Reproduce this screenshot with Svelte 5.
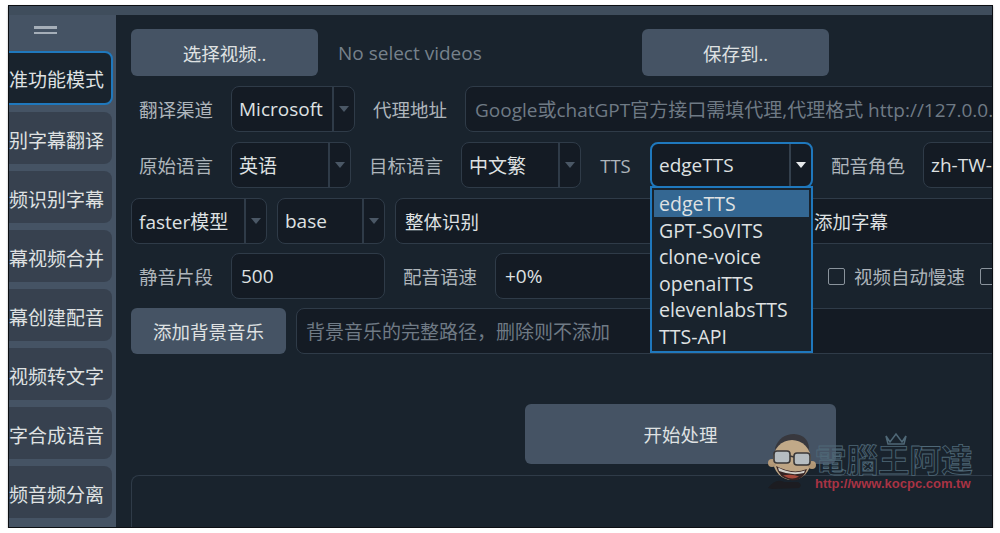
<script>
  // sidebar modes, the long names run off the left edge of the window
  const modes = [
    "标准功能模式",
    "识别字幕翻译",
    "音频识别字幕",
    "字幕视频合并",
    "字幕创建配音",
    "识别视频转文字",
    "文字合成语音",
    "视频音频分离"
  ];
  const engines = ["edgeTTS", "GPT-SoVITS", "clone-voice", "openaiTTS", "elevenlabsTTS", "TTS-API"];
</script>

<div class="frame">
  <div class="topbar"></div>
  <div class="body">
    <nav class="sidebar">
      <div class="handle"><i></i><i></i></div>
      {#each modes as mode, i}
        <div class="mode" class:active={i === 0}>{mode}</div>
      {/each}
    </nav>

    <main class="main">
      <div class="row first">
        <button class="btn w-pick">选择视频..</button>
        <span class="novideo">No select videos</span>
        <button class="btn w-pick">保存到..</button>
      </div>

      <div class="row">
        <span class="lbl">翻译渠道</span>
        <div class="combo w-123"><span class="val">Microsoft</span><span class="arrow"></span></div>
        <span class="lbl">代理地址</span>
        <div class="field wide muted">Google或chatGPT官方接口需填代理,代理格式 http://127.0.0.1:10809</div>
      </div>

      <div class="row">
        <span class="lbl">原始语言</span>
        <div class="combo w-120"><span class="val">英语</span><span class="arrow"></span></div>
        <span class="lbl">目标语言</span>
        <div class="combo w-120"><span class="val">中文繁</span><span class="arrow"></span></div>
        <span class="lbl tts">TTS</span>
        <div class="combo open w-162">
          <span class="val">edgeTTS</span><span class="arrow"></span>
          <ul class="dropdown">
            {#each engines as engine, i}
              <li class:current={i === 0}>{engine}</li>
            {/each}
          </ul>
        </div>
        <span class="lbl">配音角色</span>
        <div class="combo w-200"><span class="val">zh-TW-HsiaoChenNeural</span><span class="arrow"></span></div>
      </div>

      <div class="row tight">
        <div class="combo w-136"><span class="val">faster模型</span><span class="arrow"></span></div>
        <div class="combo w-107"><span class="val">base</span><span class="arrow"></span></div>
        <div class="field wide split"><span class="split-a">整体识别</span><span>添加字幕</span></div>
      </div>

      <div class="row tight">
        <span class="lbl">静音片段</span>
        <div class="field w-154">500</div>
        <span class="lbl">配音语速</span>
        <div class="field w-310">+0%</div>
        <label class="check first-check"><span class="box"></span>视频自动慢速</label>
        <label class="check"><span class="box"></span>配音自动加速</label>
      </div>

      <div class="row">
        <button class="btn w-155">添加背景音乐</button>
        <div class="field wide muted">背景音乐的完整路径，删除则不添加</div>
      </div>

      <button class="btn start">开始处理</button>
      <div class="log"></div>
    </main>
  </div>

  <div class="mark">
    <svg class="face" viewBox="0 0 50 58" width="50" height="58">
      <path d="M9 16 Q14 2 28 2 Q42 3 43 16 L42 22 L10 22Z" fill="#37363a" />
      <ellipse cx="26" cy="28" rx="19" ry="20" fill="#cfb38d" />
      <circle cx="6" cy="31" r="4" fill="#c2a37d" />
      <circle cx="46" cy="33" r="4" fill="#c2a37d" />
      <rect x="8" y="19" width="16" height="12" rx="3" fill="#c3c9cc" stroke="#3a3634" stroke-width="1.6" />
      <rect x="28" y="21" width="16" height="12" rx="3" fill="#c3c9cc" stroke="#3a3634" stroke-width="1.6" />
      <path d="M24 24 L28 25" stroke="#3a3634" stroke-width="1.6" />
      <path d="M10 34 Q27 43 41 37 Q37 50 24 48 Q13 46 10 34Z" fill="#3a2422" />
      <path d="M12 35.500 Q27 43 39 38.500 L38 41 Q26 44 13 39Z" fill="#e4e0d8" />
      <path d="M17 43.500 Q26 41.500 33 44.500 Q26 49 17 43.500Z" fill="#b94f3e" />
      <path d="M2 56 Q10 46 18 50 L32 50 Q37 53 33 56 L6 57Z" fill="#1d1c20" />
    </svg>
    <div class="brand">
      <svg class="crown" viewBox="0 0 24 14" width="24" height="14">
        <path d="M2 4 L6 10 L12 2 L18 10 L22 4 L20 12 L4 12Z" fill="none" stroke="#4f6877" stroke-width="1.500" />
      </svg>
      <div class="brand-name">電腦王阿達</div>
      <div class="brand-url">http://www.kocpc.com.tw</div>
    </div>
  </div>
</div>

<style>
  :global(body) {
    background: #fff;
  }

  .frame {
    position: relative;
    box-sizing: border-box;
    width: 985px;
    height: 523px;
    margin: 5px 0 0 8px;
    border: 1px solid #0c0f13;
    box-shadow: 0 1px 2px rgba(0, 0, 0, 0.3);
    display: flex;
    flex-direction: column;
    overflow: hidden;
    font-family: "Open Sans", "Noto Sans CJK SC", sans-serif;
    font-size: 18.500px;
    color: #dfe1e2;
  }

  .topbar {
    height: 9px;
    flex: none;
    background: #3f4d5c;
  }

  .body {
    flex: 1;
    display: flex;
    min-height: 0;
  }

  .sidebar {
    width: 107px;
    flex: none;
    background: #455364;
    overflow: hidden;
    display: flex;
    flex-direction: column;
    gap: 7px;
  }

  .handle {
    height: 30px;
    margin-bottom: -1px;
    padding: 11px 0 0 25px;
    box-sizing: border-box;
  }

  .handle i {
    display: block;
    width: 23px;
    height: 2.500px;
    margin-bottom: 3px;
    background: #a5aeb8;
  }

  .mode {
    flex: none;
    width: 140px;
    height: 52px;
    margin-left: -37px;
    box-sizing: border-box;
    border-radius: 8px;
    background: #37414f;
    display: flex;
    align-items: center;
    justify-content: flex-end;
    padding: 3px 8px 0 0;
    white-space: nowrap;
    font-size: 19px;
  }

  .mode.active {
    width: 141px;
    height: 54px;
    background: #19232d;
    border: 2px solid #1f78bd;
    padding: 2px 7px 0 0;
  }

  .main {
    flex: 1;
    min-width: 0;
    background: #19232d;
    overflow: hidden;
    padding: 14px 0 0 15px;
    display: flex;
    flex-direction: column;
  }

  .row {
    display: flex;
    align-items: stretch;
    gap: 10px;
    height: 46px;
    flex: none;
    margin-bottom: 10px;
    white-space: nowrap;
  }

  .row.first {
    height: 47px;
  }

  .row.tight {
    margin-bottom: 9px;
  }

  .lbl {
    width: 90px;
    flex: none;
    display: flex;
    align-items: center;
    justify-content: center;
    color: #aeb5bb;
  }

  .lbl.tts {
    width: 49px;
  }

  .muted {
    color: #6f7a85;
  }

  .novideo {
    width: 294px;
    flex: none;
    margin-left: 10px;
    align-self: center;
    font-size: 19px;
    color: #76818b;
  }

  .btn {
    flex: none;
    border: none;
    border-radius: 6px;
    background: #455364;
    color: #dfe1e2;
    font: inherit;
    padding: 0;
  }

  .combo,
  .field {
    flex: none;
    box-sizing: border-box;
    border: 1.500px solid #2f3b48;
    border-radius: 8px;
    background: #141b24;
    display: flex;
    align-items: center;
  }

  .field {
    padding-left: 9px;
    font-size: 19px;
  }

  .combo {
    position: relative;
    font-size: 19px;
  }

  .val {
    flex: 1;
    min-width: 0;
    padding-left: 7px;
    overflow: hidden;
  }

  .arrow {
    flex: none;
    align-self: stretch;
    width: 20px;
    border-left: 2px solid #2f3b48;
    position: relative;
  }

  .arrow::after {
    content: "";
    position: absolute;
    left: 5px;
    top: 50%;
    margin-top: -3px;
    border: 5px solid transparent;
    border-bottom: none;
    border-top: 6px solid #4a5765;
  }

  .combo.open {
    border: 2px solid #1f78bd;
  }

  .combo.open .arrow {
    border-left-color: #34404d;
  }

  .combo.open .arrow::after {
    border-top-color: #e6e8ea;
  }

  .dropdown {
    position: absolute;
    z-index: 2;
    top: 100%;
    left: -2px;
    right: -2px;
    margin: 0;
    padding: 2px;
    list-style: none;
    background: #19232d;
    border: 2px solid #1f78bd;
    height: 167px;
    box-sizing: border-box;
    font-size: 19.500px;
  }

  .dropdown li {
    height: 26.500px;
    line-height: 27px;
    padding-left: 5px;
  }

  .dropdown .current {
    background: #346792;
  }

  .w-pick { width: 187px; }
  .w-123 { width: 124px; }
  .w-120 { width: 120px; }
  .w-162 { width: 163px; }
  .w-200 { width: 200px; }
  .w-136 { width: 136px; }
  .w-107 { width: 108px; }
  .w-154 { width: 154px; }
  .w-310 { width: 310px; }
  .w-155 { width: 155px; }

  .wide {
    width: 720px;
  }

  .split {
    font-size: 18.500px;
  }

  .split-a {
    width: 409px;
    flex: none;
  }

  .check {
    flex: none;
    display: flex;
    align-items: center;
    gap: 9px;
    color: #aeb5bb;
    margin-left: 5px;
  }

  .first-check {
    margin-left: 13px;
  }

  .box {
    box-sizing: border-box;
    width: 17px;
    height: 17px;
    border: 1.500px solid #8a939c;
    border-radius: 2px;
  }

  .start {
    flex: none;
    width: 311px;
    height: 60px;
    margin: 40px 0 0 394px;
  }

  .log {
    flex: 1;
    margin-top: 11px;
    width: 1000px;
    border: 1.500px solid #2f3b48;
    border-bottom: none;
    border-radius: 8px 0 0 0;
    background: #19232d;
  }

  .mark {
    position: absolute;
    z-index: 3;
    left: 757px;
    top: 426px;
    display: flex;
    pointer-events: none;
  }

  .face {
    flex: none;
    opacity: 0.9;
  }

  .brand {
    position: relative;
    margin-left: -1px;
    padding-top: 11px;
    width: 160px;
  }

  .crown {
    position: absolute;
    left: 69px;
    top: 0;
  }

  .brand-name {
    font-size: 31.500px;
    line-height: 34px;
    font-weight: 700;
    color: transparent;
    -webkit-text-stroke: 0.800px #4f6877;
    white-space: nowrap;
  }

  .brand-url {
    font-family: "Liberation Sans", sans-serif;
    font-size: 13px;
    font-weight: 700;
    line-height: 13px;
    color: #a83344;
    white-space: nowrap;
  }
</style>
